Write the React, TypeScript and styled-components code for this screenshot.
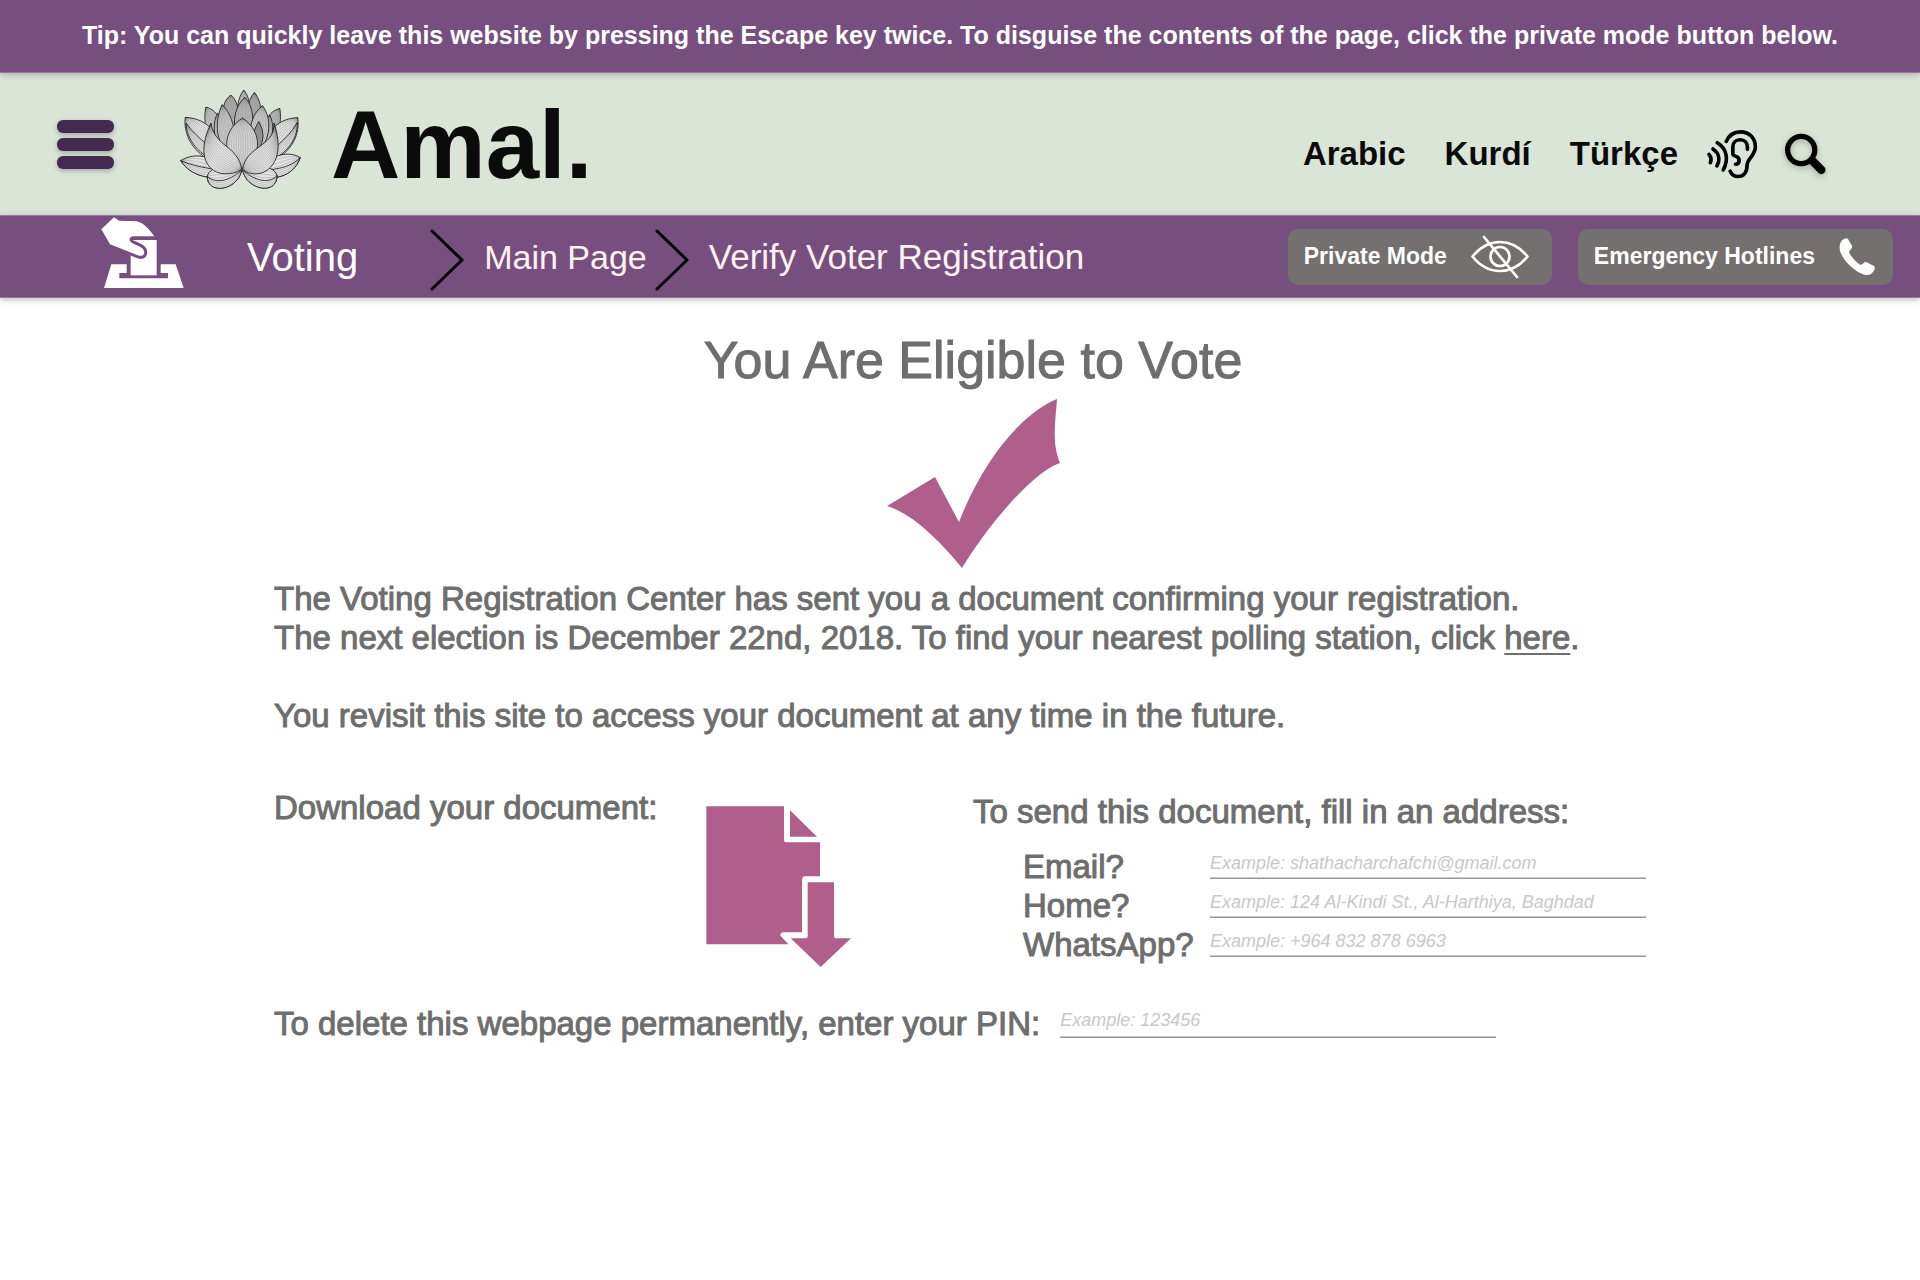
import React from "react";
import styled, { createGlobalStyle } from "styled-components";

const color = {
  purple: "#774f7f",
  purpleEdge: "#967a9a",
  plum: "#442a50",
  sage: "#dae4d7",
  ink: "#0b0b0b",
  stone: "#73706f",
  text: "#6e6e6e",
  hint: "#c8c8c8",
  line: "#979797",
  lineSoft: "#c9c9c9",
  rose: "#b05f8c",
  blush: "#fff3f2",
};

const GlobalStyle = createGlobalStyle`
  * { box-sizing: border-box; }
  body {
    margin: 0;
    background: #fff;
    color: ${color.text};
    font-family: "Liberation Sans", Arial, sans-serif;
  }
  h1, h2, p { margin: 0; font-weight: 400; }
  svg { display: block; flex-shrink: 0; }
`;

const TipBar = styled.p`
  position: relative;
  min-height: 73px;
  padding: 20px 24px 22px;
  background: ${color.purple};
  border-bottom: 1px solid ${color.purpleEdge};
  box-shadow: 0 2px 6px rgba(0, 0, 0, 0.2);
  color: #fff;
  font-size: 25px;
  font-weight: 700;
  line-height: 30px;
  text-align: center;
`;

const Header = styled.header`
  display: flex;
  align-items: center;
  justify-content: space-between;
  min-height: 142px;
  padding: 0 93px 0 57px;
  background: ${color.sage};
`;

const Brand = styled.div`
  display: flex;
  align-items: center;
`;

const MenuButton = styled.button`
  display: flex;
  flex-direction: column;
  gap: 5px;
  width: 57px;
  padding: 0;
  border: 0;
  background: none;
  cursor: pointer;
`;

const MenuBar = styled.span`
  height: 13px;
  border-radius: 6px;
  background: ${color.plum};
  box-shadow: 0 2px 5px rgba(0, 0, 0, 0.25);
`;

const HomeLink = styled.a`
  display: flex;
  align-items: center;
  gap: 30px;
  margin-left: 66px;
  padding-top: 2px;
  color: ${color.ink};
  font-size: 96px;
  font-weight: 700;
  line-height: 110px;
  text-decoration: none;
`;

const LotusMark = styled.svg`
  margin-bottom: 12px;
`;

const Tools = styled.nav`
  display: flex;
  align-items: center;
  padding-top: 20px;
`;

const Languages = styled.div`
  display: flex;
  gap: 39px;
  margin-right: 28px;
`;

const LanguageLink = styled.a`
  color: ${color.ink};
  font-size: 33px;
  font-weight: 700;
  line-height: 40px;
  text-decoration: none;
`;

const IconButton = styled.button`
  padding: 0;
  border: 0;
  background: none;
  cursor: pointer;

  & + & { margin-left: 25px; }
`;

const SearchIcon = styled.svg`
  filter: drop-shadow(0 2px 3px rgba(0, 0, 0, 0.25));
`;

const NavBar = styled.div`
  position: relative;
  display: flex;
  align-items: center;
  justify-content: space-between;
  min-height: 83px;
  padding: 0 27px 0 101px;
  background: ${color.purple};
  border-top: 1px solid ${color.purpleEdge};
  border-bottom: 1px solid ${color.purpleEdge};
  box-shadow: 0 2px 6px rgba(0, 0, 0, 0.25);
`;

const Crumbs = styled.nav`
  display: flex;
  align-items: center;
`;

const SectionLink = styled.a`
  display: flex;
  align-items: center;
  gap: 63px;
  margin-right: 72px;
  color: #fff;
  font-size: 40px;
  line-height: 48px;
  text-decoration: none;
`;

const BallotIcon = styled.svg`
  margin-bottom: 7px;
`;

const CrumbLink = styled.a<{ $current?: boolean }>`
  margin: 0 8px 0 20px;
  color: ${color.blush};
  font-size: ${({ $current }) => ($current ? 35 : 34)}px;
  line-height: 40px;
  text-decoration: none;
`;

const ChevronIcon = styled.svg`
  margin-top: 6px;
`;

const Actions = styled.div`
  display: flex;
  gap: 26px;
`;

const ActionButton = styled.button<{ $end: number }>`
  display: flex;
  align-items: center;
  gap: 24px;
  height: 56px;
  padding: 0 ${({ $end }) => $end}px 0 16px;
  border: 0;
  border-radius: 10px;
  background: ${color.stone};
  color: #fff;
  font-family: inherit;
  font-size: 23px;
  font-weight: 700;
  cursor: pointer;
`;

const Main = styled.main`
  max-width: 1372px;
  margin: 0 auto;
  padding: 32px 0 48px;
  font-size: 33px;
  line-height: 39px;
  -webkit-text-stroke: 1px ${color.text};
`;

const Hero = styled.section`
  display: flex;
  flex-direction: column;
  align-items: center;
  gap: 8px;
  padding-left: 26px;
`;

const Title = styled.h1`
  font-size: 52px;
  line-height: 60px;
`;

const Message = styled.section`
  display: flex;
  flex-direction: column;
  gap: 39px;
  margin-top: 10px;
`;

const TextLink = styled.a`
  color: inherit;
  text-decoration-thickness: 2px;
  text-underline-offset: 4px;
`;

const Delivery = styled.section`
  display: grid;
  grid-template-columns: 1fr auto;
  align-items: start;
  margin-top: 53px;
`;

const Download = styled.div`
  display: grid;
  grid-template-columns: 432px auto;
  align-items: start;
  justify-content: start;
`;

const DownloadLink = styled.a`
  display: block;
  padding-top: 18px;
`;

const DownloadText = styled.h2`
  font-size: 33px;
`;

const SendForm = styled.form`
  padding-top: 4px;
`;

const FieldList = styled.div`
  display: grid;
  grid-template-columns: 187px 436px;
  margin: 16px 0 0 50px;
`;

const FieldInput = styled.input<{ $tall?: boolean }>`
  width: 436px;
  max-width: 100%;
  height: ${({ $tall }) => ($tall ? 34 : 32)}px;
  padding: ${({ $tall }) => ($tall ? 0 : 2)}px 0 0;
  border: 0;
  border-bottom: 1px solid ${color.line};
  border-radius: 0;
  background: transparent;
  box-shadow: inset 0 -1px ${color.lineSoft};
  color: ${color.text};
  font-family: inherit;
  font-size: 18px;
  font-style: italic;
  -webkit-text-stroke: 0;

  &::placeholder {
    color: ${color.hint};
    opacity: 1;
  }
`;

const DeleteForm = styled.form`
  display: flex;
  align-items: flex-start;
  gap: 20px;
  margin-top: 36px;
`;

type Point = [number, number];
type PetalShape = { base: Point; left: [Point, Point]; tip: Point; right: [Point, Point]; veins: number; shade?: string };

// Back to front. The control points of each edge run from the base to the tip.
const petals: PetalShape[] = [
  { base: [220, 150], left: [[195, 110], [200, 60]], tip: [222, 33], right: [[245, 110], [245, 60]], veins: 5, shade: "#c4c4c4" },
  { base: [200, 170], left: [[160, 130], [145, 75]], tip: [183, 48], right: [[215, 110], [205, 65]], veins: 7, shade: "#b0b0b0" },
  { base: [240, 170], left: [[225, 120], [230, 65]], tip: [254, 40], right: [[275, 130], [285, 80]], veins: 7, shade: "#b0b0b0" },
  { base: [165, 235], left: [[110, 190], [98, 130]], tip: [108, 84], right: [[165, 140], [150, 95]], veins: 7, shade: "#c8c8c8" },
  { base: [280, 235], left: [[270, 140], [290, 100]], tip: [330, 88], right: [[325, 190], [338, 130]], veins: 7, shade: "#bcbcbc" },
  { base: [165, 262], left: [[80, 240], [38, 175]], tip: [46, 115], right: [[155, 165], [115, 118]], veins: 11 },
  { base: [270, 262], left: [[275, 165], [320, 118]], tip: [384, 116], right: [[350, 240], [394, 180]], veins: 11 },
  { base: [150, 250], left: [[90, 232], [50, 185]], tip: [48, 132], right: [[130, 200], [85, 185]], veins: 6 },
  { base: [290, 250], left: [[300, 205], [350, 190]], tip: [383, 130], right: [[340, 235], [386, 185]], veins: 6 },
  { base: [219, 210], left: [[180, 150], [190, 85]], tip: [225, 55], right: [[260, 150], [255, 85]], veins: 9, shade: "#bcbcbc" },
  { base: [180, 240], left: [[128, 200], [125, 135]], tip: [143, 103], right: [[185, 160], [165, 120]], veins: 6, shade: "#c4c4c4" },
  { base: [195, 240], left: [[130, 200], [135, 120]], tip: [157, 77], right: [[200, 160], [190, 110]], veins: 9, shade: "#cfcfcf" },
  { base: [250, 240], left: [[265, 160], [285, 130]], tip: [300, 108], right: [[312, 200], [318, 145]], veins: 6, shade: "#c4c4c4" },
  { base: [240, 240], left: [[235, 160], [240, 110]], tip: [278, 80], right: [[305, 200], [310, 120]], veins: 9, shade: "#cfcfcf" },
  { base: [245, 235], left: [[240, 190], [250, 155]], tip: [267, 128], right: [[280, 210], [290, 165]], veins: 6, shade: "#999999" },
  { base: [190, 285], left: [[125, 310], [60, 290]], tip: [32, 245], right: [[140, 235], [80, 215]], veins: 5 },
  { base: [190, 285], left: [[125, 310], [60, 290]], tip: [32, 245], right: [[140, 268], [90, 270]], veins: 3 },
  { base: [242, 285], left: [[290, 240], [345, 208]], tip: [392, 236], right: [[310, 310], [370, 295]], veins: 5 },
  { base: [242, 285], left: [[290, 268], [350, 278]], tip: [392, 236], right: [[310, 310], [370, 295]], veins: 3 },
  { base: [216, 272], left: [[205, 335], [112, 350]], tip: [112, 292], right: [[175, 260], [122, 258]], veins: 5 },
  { base: [216, 272], left: [[205, 335], [112, 350]], tip: [112, 292], right: [[190, 300], [140, 320]], veins: 3 },
  { base: [218, 272], left: [[260, 260], [312, 258]], tip: [322, 290], right: [[230, 335], [322, 350]], veins: 5 },
  { base: [218, 272], left: [[245, 300], [295, 320]], tip: [322, 290], right: [[230, 335], [322, 350]], veins: 3 },
  { base: [217, 272], left: [[160, 240], [150, 160]], tip: [218, 117], right: [[273, 240], [283, 160]], veins: 12, shade: "#d6d6d6" },
  { base: [216, 272], left: [[150, 310], [60, 265]], tip: [123, 133], right: [[205, 200], [135, 205]], veins: 12 },
  { base: [218, 272], left: [[228, 200], [315, 205]], tip: [313, 133], right: [[268, 310], [358, 265]], veins: 12 },
];

const mix = (a: Point, b: Point, t: number): string =>
  `${(a[0] + (b[0] - a[0]) * t).toFixed(1)},${(a[1] + (b[1] - a[1]) * t).toFixed(1)}`;

function Petal({ base, left: l, tip, right: r, veins, shade = "#e2e3e2" }: PetalShape) {
  const outline = `M${base} C${l[0]} ${l[1]} ${tip} C${r[1]} ${r[0]} ${base}Z`;
  // The veins sweep from one edge of the petal to the other.
  const lines = Array.from({ length: veins }, (_, i) => {
    const t = (i + 1) / (veins + 1);
    return `M${base} C${mix(l[0], r[0], t)} ${mix(l[1], r[1], t)} ${tip}`;
  }).join(" ");
  return (
    <g>
      <path d={outline} fill={shade} />
      <path d={lines} fill="none" stroke="#777" strokeWidth="1" />
      <path d={outline} fill="none" stroke="#1c1c1c" strokeWidth="2.6" strokeLinejoin="round" />
    </g>
  );
}

const Lotus = () => (
  <LotusMark width="121" height="100" viewBox="30 30 364 300" aria-hidden="true">
    {petals.map((petal, i) => (
      <Petal key={i} {...petal} />
    ))}
  </LotusMark>
);

const Ear = () => (
  <svg width="53" height="52" viewBox="48 54 160 156" fill="none" stroke="#000" strokeWidth="11" strokeLinecap="round" aria-hidden="true">
    <path d="M109 94C118 74 133 65 152 65C180 65 197 85 197 110C197 137 172 146 172 165C172 190 160 200 145 200C132 200 125 193 121 184" />
    <path d="M173 118V110C173 98 164 89 151 89C138 89 129 98 129 110V133C131 140 148 137 148 150C148 158 145 163 137 163" />
    <path d="M82 98C110 115 118 147 100 180M69 117C88 130 91 150 81 168M57 133Q67 145 61 158" />
  </svg>
);

const Search = () => (
  <SearchIcon width="43" height="42" viewBox="282 66 130 126" fill="none" stroke="#000" aria-hidden="true">
    <circle cx="334" cy="117" r="41" strokeWidth="16" />
    <path d="M368 150L395 177" strokeWidth="25" strokeLinecap="round" />
  </SearchIcon>
);

const Ballot = () => (
  <BallotIcon width="83" height="72" viewBox="33 35 249 216" fill="#fff" aria-hidden="true">
    <path d="M122 104H200V210H122Z" />
    <path
      d="M34 72L72 36L87 46L140 48C165 54 178 74 193 93H130Q118 94 119 105Q121 112 130 115L150 124Q163 131 163 142Q160 154 147 151L60 117Z"
      stroke={color.purple}
      strokeWidth="18"
      paintOrder="stroke"
    />
    <path d="M64 177H110V203H88V219H234V203H212V177H257L281 248H42Z" />
  </BallotIcon>
);

const Chevron = () => (
  <ChevronIcon width="34" height="62" viewBox="0 0 34 62" fill="none" stroke="#000" strokeWidth="3" strokeLinecap="round" strokeLinejoin="round" aria-hidden="true">
    <path d="M2 2L32 31L2 60" />
  </ChevronIcon>
);

const HiddenEye = () => (
  <svg width="58" height="44" viewBox="0 0 58 44" fill="none" stroke="#fff" strokeWidth="2.7" strokeLinecap="round" strokeLinejoin="round" aria-hidden="true">
    <path d="M1.5 21.500C10 11 19 7 29 7C39 7 48 11 56.500 21.500C48 32 39 36 29 36C19 36 10 32 1.500 21.500Z" />
    <circle cx="29" cy="21.500" r="9.500" />
    <path d="M13 2L46 42" />
  </svg>
);

const Phone = () => (
  <svg width="37" height="39" viewBox="0 0 37 39" fill="#fff" aria-hidden="true">
    <path d="M5 2C7 1 8 1 9 2L13 9C14 11 11 13 10 15C12 20 18 26 22 28C24 27 25 25 27 25L35 29C37 31 35 34 32 37C29 39 25 38 21 36C12 31 4 23 1 14C0 8 1 4 5 2Z" />
  </svg>
);

const CheckMark = () => (
  <svg width="175" height="171" viewBox="0 0 175 171" fill={color.rose} role="img" aria-label="Eligible">
    <path d="M1 108L49 79L73 124C97 62 135 16 171 1C169 28 166 45 174 65C151 72 108 118 76 170C50 138 24 115 1 108Z" />
  </svg>
);

const DocumentDown = () => (
  <svg width="146" height="162" viewBox="78 78 438 486" fill={color.rose} aria-hidden="true">
    <path d="M79 79H312V179Q312 187 320 187H420V289H376Q366 290 366 300V457H308Q298 460 302 468L325 493H79Z" />
    <path d="M330 91L411 170H330Z" />
    <path d="M383 307H462V467Q462 475 470 475H513L422 561L332 475H375Q383 475 383 467Z" />
  </svg>
);

const languages = ["Arabic", "Kurdí", "Türkçe"];

const fields = [
  { id: "email", label: "Email?", type: "email", hint: "Example: shathacharchafchi@gmail.com" },
  { id: "home", label: "Home?", type: "text", hint: "Example: 124 Al-Kindi St., Al-Harthiya, Baghdad" },
  { id: "whatsapp", label: "WhatsApp?", type: "tel", hint: "Example: +964 832 878 6963" },
];

export default function App() {
  return (
    <>
      <GlobalStyle />
      <TipBar>
        Tip: You can quickly leave this website by pressing the Escape key twice. To disguise the contents of the page,
        click the private mode button below.
      </TipBar>
      <Header>
        <Brand>
          <MenuButton type="button" aria-label="Menu">
            <MenuBar />
            <MenuBar />
            <MenuBar />
          </MenuButton>
          <HomeLink href="#home">
            <Lotus />
            Amal.
          </HomeLink>
        </Brand>
        <Tools>
          <Languages>
            {languages.map((name) => (
              <LanguageLink key={name} href={`#${name}`}>
                {name}
              </LanguageLink>
            ))}
          </Languages>
          <IconButton type="button" aria-label="Listen">
            <Ear />
          </IconButton>
          <IconButton type="button" aria-label="Search">
            <Search />
          </IconButton>
        </Tools>
      </Header>
      <NavBar>
        <Crumbs>
          <SectionLink href="#voting">
            <Ballot />
            Voting
          </SectionLink>
          <Chevron />
          <CrumbLink href="#main-page">Main Page</CrumbLink>
          <Chevron />
          <CrumbLink href="#verify" $current>
            Verify Voter Registration
          </CrumbLink>
        </Crumbs>
        <Actions>
          <ActionButton type="button" $end={23}>
            Private Mode
            <HiddenEye />
          </ActionButton>
          <ActionButton type="button" $end={17}>
            Emergency Hotlines
            <Phone />
          </ActionButton>
        </Actions>
      </NavBar>
      <Main>
        <Hero>
          <Title>You Are Eligible to Vote</Title>
          <CheckMark />
        </Hero>
        <Message>
          <p>
            The Voting Registration Center has sent you a document confirming your registration.
            <br />
            The next election is December 22nd, 2018. To find your nearest polling station, click{" "}
            <TextLink href="#stations">here</TextLink>.
          </p>
          <p>You revisit this site to access your document at any time in the future.</p>
        </Message>
        <Delivery>
          <Download>
            <DownloadText>Download your document:</DownloadText>
            <DownloadLink href="#document" aria-label="Download your document">
              <DocumentDown />
            </DownloadLink>
          </Download>
          <SendForm>
            <p>To send this document, fill in an address:</p>
            <FieldList>
              {fields.map(({ id, label, type, hint }) => (
                <React.Fragment key={id}>
                  <label htmlFor={id}>{label}</label>
                  <FieldInput id={id} type={type} placeholder={hint} />
                </React.Fragment>
              ))}
            </FieldList>
          </SendForm>
        </Delivery>
        <DeleteForm>
          <label htmlFor="pin">To delete this webpage permanently, enter your PIN:</label>
          <FieldInput id="pin" type="text" inputMode="numeric" placeholder="Example: 123456" $tall />
        </DeleteForm>
      </Main>
    </>
  );
}
